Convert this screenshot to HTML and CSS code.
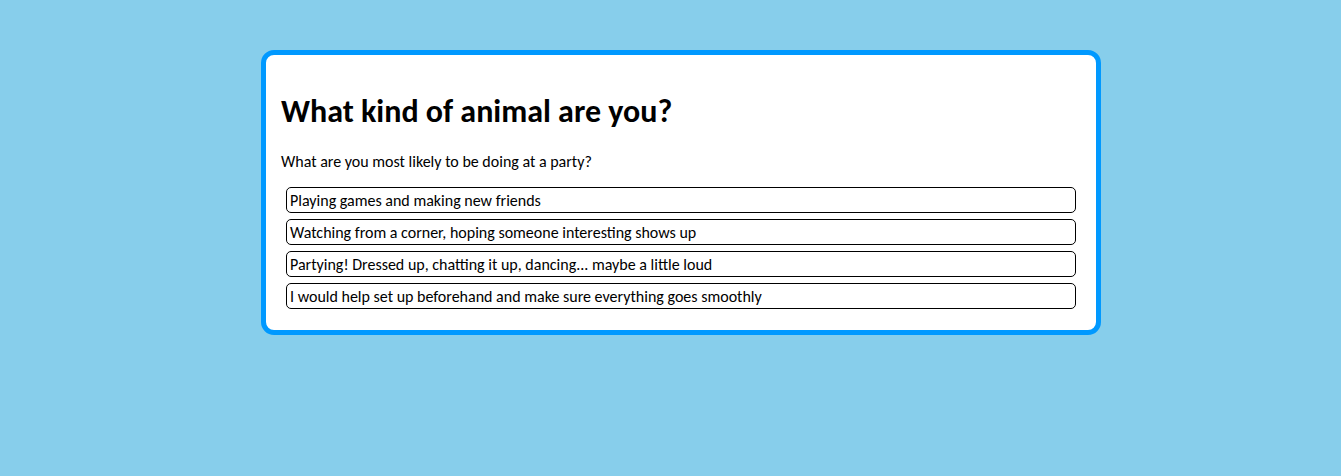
FILE: index.html
```html
<!DOCTYPE html>
<html>
<head>
<meta charset="utf-8">
<link rel="stylesheet" href="styles.css">
</head>
<body>
<div class="card">
  <h1 class="title">What kind of animal are you?</h1>
  <p class="question">What are you most likely to be doing at a party?</p>
  <div class="answers">
    <button class="answer">Playing games and making new friends</button>
    <button class="answer">Watching from a corner, hoping someone interesting shows up</button>
    <button class="answer">Partying! Dressed up, chatting it up, dancing... maybe a little loud</button>
    <button class="answer">I would help set up beforehand and make sure everything goes smoothly</button>
  </div>
</div>
</body>
</html>
```

FILE: styles.css
```css
html, body {
  margin: 0;
  padding: 0;
}
body {
  background: #87ceeb;
  font-family: Carlito, Calibri, "Open Sans", sans-serif;
  height: 476px;
  padding-top: 50px;
  box-sizing: border-box;
}
.card {
  margin-left: 261px;
  width: 840px;
  box-sizing: border-box;
  background: #fff;
  border: 5px solid #0099ff;
  border-radius: 13px;
  padding: 25px 20px 21px 15px;
}
.title {
  margin: 12px 0 0 0;
  font-size: 32px;
  line-height: 40px;
  font-weight: bold;
  color: #000;
}
.question {
  margin: 20px 0 15px 0;
  font-size: 16px;
  line-height: 20px;
}
.answers {
  display: flex;
  flex-direction: column;
  gap: 6px;
  padding-left: 5px;
}
.answer {
  display: block;
  text-align: left;
  background: #fff;
  border: 1px solid #000;
  border-radius: 5px;
  height: 26px;
  padding: 1px 3px 0 3px;
  font-family: inherit;
  font-size: 16px;
  color: #000;
}
```
